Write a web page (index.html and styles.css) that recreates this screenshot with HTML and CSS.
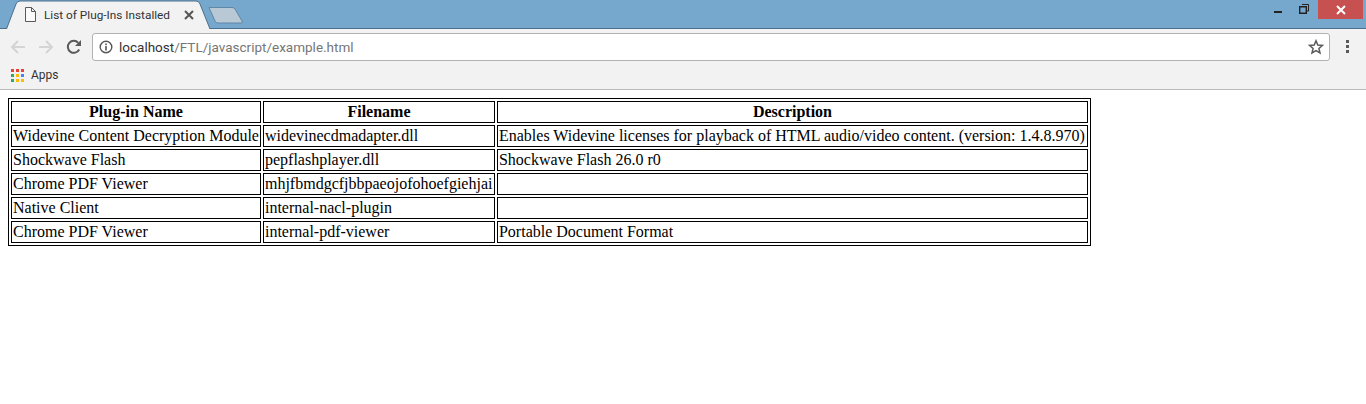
FILE: index.html
```html
<!DOCTYPE html>
<html lang="en">
<head>
<meta charset="utf-8">
<title>List of Plug-Ins Installed</title>
<link rel="stylesheet" href="styles.css">
</head>
<body>
<header class="chrome">
  <div class="tabstrip">
    <div class="tab">
      <svg class="tab-shape" width="208" height="29" viewBox="0 0 208 29"><path d="M6.5 29 L16 4 Q17 1 20 1 L196 1 Q199 1 200 4 L210 29" fill="#f2f2f2" stroke="#4d6f8c" stroke-width="1"/></svg>
      <svg class="tab-icon" width="11" height="15" viewBox="0 0 11 15"><path d="M.5 .5 H6.5 L10.5 4.5 V14.5 H.5 Z M6.5 .5 V4.5 H10.5" fill="#fafafa" stroke="#5a5a5a" stroke-width="1"/></svg>
      <span class="tab-title">List of Plug-Ins Installed</span>
      <svg class="tab-close" width="10" height="10" viewBox="0 0 10 10"><path d="M1 1 L9 9 M9 1 L1 9" stroke="#555" stroke-width="2"/></svg>
    </div>
    <svg class="newtab" width="36" height="18" viewBox="0 0 36 18"><path d="M1 1.5 H24 Q26 1.5 27 3 L34 15 Q35 17 33 17 H10 Q8 17 7 15 Z" fill="#b9c8d5" stroke="#5f87a6" stroke-width="1"/></svg>
    <div class="winctl">
      <svg class="win-min" width="10" height="20" viewBox="0 0 10 20"><rect x="0" y="11" width="8" height="2" fill="#222"/></svg>
      <svg class="win-restore" width="12" height="20" viewBox="0 0 12 20"><path d="M.7 6.7 H7.3 V13.3 H.7 Z" fill="none" stroke="#222" stroke-width="1.4"/><path d="M3 4.5 H9.5 V11 H7.5" fill="none" stroke="#222"/></svg>
      <div class="closebtn"><svg width="10" height="10" viewBox="0 0 10 10"><path d="M1 1 L9 9 M9 1 L1 9" stroke="#fff" stroke-width="2"/></svg></div>
    </div>
  </div>
  <div class="toolbar">
    <svg class="navicon" width="16" height="16" viewBox="0 0 16 16"><path d="M15 8 H2 M8 2 L2 8 L8 14" fill="none" stroke="#d4d4d4" stroke-width="2"/></svg>
    <svg class="navicon" width="16" height="16" viewBox="0 0 16 16"><path d="M1 8 H14 M8 2 L14 8 L8 14" fill="none" stroke="#d4d4d4" stroke-width="2"/></svg>
    <svg class="navicon" width="16" height="16" viewBox="0 0 16 16"><path d="M13.2 10.5 A6 6 0 1 1 12.3 3.8" fill="none" stroke="#5a5a5a" stroke-width="2"/><path d="M15 1 V7 H9 Z" fill="#5a5a5a"/></svg>
    <div class="omnibox">
      <svg class="info" width="14" height="14" viewBox="0 0 14 14"><circle cx="7" cy="7" r="5.8" fill="none" stroke="#555" stroke-width="1.4"/><rect x="6.2" y="6" width="1.6" height="4.5" fill="#555"/><rect x="6.2" y="3.5" width="1.6" height="1.6" fill="#555"/></svg>
      <span class="url"><span class="host">localhost</span>/FTL/javascript/example.html</span>
      <svg class="star" width="16" height="16" viewBox="0 0 16 16"><path d="M8 1.8 L9.8 6 L14.4 6.4 L10.9 9.4 L12 13.9 L8 11.5 L4 13.9 L5.1 9.4 L1.6 6.4 L6.2 6 Z" fill="none" stroke="#5a5a5a" stroke-width="1.5"/></svg>
    </div>
    <svg class="menu" width="4" height="14" viewBox="0 0 4 14"><rect x="0" y="0" width="3" height="3" fill="#5a5a5a"/><rect x="0" y="5" width="3" height="3" fill="#5a5a5a"/><rect x="0" y="10" width="3" height="3" fill="#5a5a5a"/></svg>
  </div>
  <div class="bookmarks">
    <svg width="13" height="13" viewBox="0 0 13 13">
      <rect x="0" y="0" width="3" height="3" fill="#ea4335"/><rect x="5" y="0" width="3" height="3" fill="#ea4335"/><rect x="10" y="0" width="3" height="3" fill="#ea4335"/>
      <rect x="0" y="5" width="3" height="3" fill="#34a853"/><rect x="5" y="5" width="3" height="3" fill="#fbbc05"/><rect x="10" y="5" width="3" height="3" fill="#4285f4"/>
      <rect x="0" y="10" width="3" height="3" fill="#34a853"/><rect x="5" y="10" width="3" height="3" fill="#fbbc05"/><rect x="10" y="10" width="3" height="3" fill="#fbbc05"/>
    </svg>
    <span class="bm-label">Apps</span>
  </div>
</header>
<main class="page">
  <table class="plugins">
    <tr><th>Plug-in Name</th><th class="col-file">Filename</th><th class="col-desc">Description</th></tr>
    <tr><td>Widevine Content Decryption Module</td><td>widevinecdmadapter.dll</td><td>Enables Widevine licenses for playback of HTML audio/video content. (version: 1.4.8.970)</td></tr>
    <tr><td>Shockwave Flash</td><td>pepflashplayer.dll</td><td>Shockwave Flash 26.0 r0</td></tr>
    <tr><td>Chrome PDF Viewer</td><td>mhjfbmdgcfjbbpaeojofohoefgiehjai</td><td></td></tr>
    <tr><td>Native Client</td><td>internal-nacl-plugin</td><td></td></tr>
    <tr><td>Chrome PDF Viewer</td><td>internal-pdf-viewer</td><td>Portable Document Format</td></tr>
  </table>
</main>
</body>
</html>
```
FILE: styles.css
```css
html, body { margin: 0; padding: 0; background: #fff; }
body { height: 404px; overflow: hidden; font-family: "Liberation Serif", "Times New Roman", serif; color: #000; }

.chrome { font-family: Roboto, "Open Sans", sans-serif; height: 90px; box-sizing: border-box; background: #f2f2f2; border-bottom: 1px solid #b9b9b9; display: flex; flex-direction: column; }

.tabstrip { height: 29px; box-sizing: border-box; background: #76a7cc; border-bottom: 1px solid #4d6f8c; display: flex; align-items: flex-start; flex: none; }
.tab { position: relative; width: 208px; height: 29px; flex: none; display: flex; align-items: center; }
.tab-shape { position: absolute; left: 0; top: 0; overflow: visible; }
.tab-icon { position: relative; margin-left: 25px; flex: none; }
.tab-title { position: relative; margin-left: 8px; font-size: 11.8px; line-height: 16px; color: #333; white-space: nowrap; }
.tab-close { position: relative; margin-left: auto; margin-right: 14px; flex: none; }
.newtab { margin: 6px 0 0 0; flex: none; }

.winctl { margin-left: auto; display: flex; align-items: flex-start; margin-right: 3px; }
.win-min { flex: none; margin-right: 15px; }
.win-restore { flex: none; margin-right: 7px; }
.closebtn { width: 45px; height: 19px; background: #c75050; display: flex; align-items: center; justify-content: center; }

.toolbar { height: 36px; display: flex; align-items: center; flex: none; padding: 0 0 0 10px; }
.navicon { flex: none; margin-right: 12px; }
.omnibox { width: 1238px; height: 28px; box-sizing: border-box; margin-left: -2px; background: #fff; border: 1px solid #b3b3b3; border-radius: 3px; display: flex; align-items: center; padding: 0 5px 0 6px; }
.info { flex: none; }
.url { margin-left: 6px; font-size: 13.5px; color: #767676; white-space: nowrap; }
.host { color: #333; }
.star { margin-left: auto; flex: none; }
.menu { margin-left: 16px; flex: none; }

.bookmarks { display: flex; align-items: center; padding: 0 0 0 11px; height: 20px; flex: none; }
.bm-label { margin-left: 7px; font-size: 12px; color: #333; }

.page { padding: 8px; }
.plugins { border: 1px solid #000; border-spacing: 2px; }
.plugins th, .plugins td { border: 1px solid #000; padding: 1px; font-size: 16px; }
.col-file { width: 228px; }
.col-desc { width: 587px; }
```
